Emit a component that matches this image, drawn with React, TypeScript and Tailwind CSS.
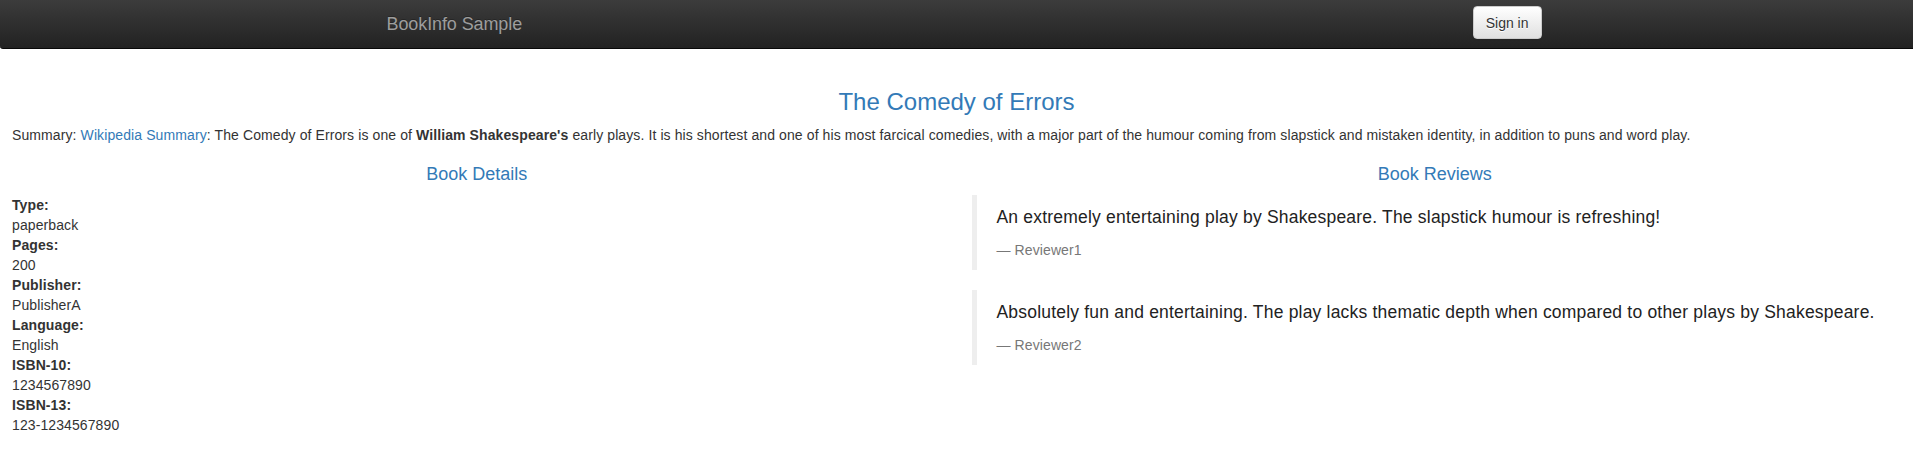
import React from "react";

const details: [string, string][] = [
  ["Type:", "paperback"],
  ["Pages:", "200"],
  ["Publisher:", "PublisherA"],
  ["Language:", "English"],
  ["ISBN-10:", "1234567890"],
  ["ISBN-13:", "123-1234567890"],
];

const reviews = [
  {
    text: "An extremely entertaining play by Shakespeare. The slapstick humour is refreshing!",
    who: "Reviewer1",
  },
  {
    text: "Absolutely fun and entertaining. The play lacks thematic depth when compared to other plays by Shakespeare.",
    who: "Reviewer2",
  },
];

export default function App() {
  return (
    <div
      className="min-h-[461px] bg-white text-[14px] leading-[20px] text-[#333] tracking-[0.1px]"
      style={{ fontFamily: '"Liberation Sans", Arial, Helvetica, sans-serif' }}
    >
      <nav className="h-[49px] border-b border-[#080808] bg-gradient-to-b from-[#3c3c3c] to-[#222] rounded-bl-[3px]">
        <div className="mx-auto flex h-[48px] w-[1170px] items-start justify-between pl-[15px]">
          <a
            href="#"
            className="mt-[14px] text-[18px] leading-[20px] tracking-[-0.1px] text-[#9d9d9d] [text-shadow:0_-1px_0_rgba(0,0,0,0.25)]"
          >
            BookInfo Sample
          </a>
          <button
            type="button"
            className="mt-[6px] h-[33px] rounded-[4px] border border-[#ccc] bg-gradient-to-b from-white to-[#e0e0e0] px-[12px] text-[14px] leading-[20px] tracking-normal text-[#333] shadow-[inset_0_1px_0_rgba(255,255,255,0.15),0_1px_1px_rgba(0,0,0,0.075)] [text-shadow:0_1px_0_#fff]"
          >
            Sign in
          </button>
        </div>
      </nav>

      <div className="px-[12px]">
        <h3 className="mt-[40px] mb-[10px] text-center text-[24px] leading-[26.4px] font-normal tracking-normal text-[#337ab7]">
          The Comedy of Errors
        </h3>
        <p className="mb-[10px]">
          Summary:{" "}
          <a href="#" className="text-[#337ab7]">
            Wikipedia Summary
          </a>
          : The Comedy of Errors is one of <b>William Shakespeare's</b> early
          plays. It is his shortest and one of his most farcical comedies, with a
          major part of the humour coming from slapstick and mistaken identity, in
          addition to puns and word play.
        </p>
      </div>

      <div className="grid grid-cols-2">
        <div className="pl-[12px] pr-[15px]">
          <h4 className="mt-[10px] mb-[10px] text-center text-[18px] leading-[19.8px] font-normal tracking-normal text-[#337ab7]">
            Book Details
          </h4>
          <dl className="mb-[20px]">
            {details.map(([k, v]) => (
              <React.Fragment key={k}>
                <dt className="font-bold">{k}</dt>
                <dd>{v}</dd>
              </React.Fragment>
            ))}
          </dl>
        </div>
        <div className="px-[15px]">
          <h4 className="mt-[10px] mb-[10px] text-center text-[18px] leading-[19.8px] font-normal tracking-normal text-[#337ab7]">
            Book Reviews
          </h4>
          {reviews.map((r) => (
            <blockquote
              key={r.who}
              className="mb-[20px] border-l-[5px] border-[#eee] px-[20px] py-[10px] text-[17.5px] leading-[25px]"
            >
              <p className="mb-[10px] tracking-[0.2px] text-[#222]">{r.text}</p>
              <small className="block text-[14px] leading-[20px] text-[#777]">
                {"\u2014\u00a0"}
                {r.who}
              </small>
            </blockquote>
          ))}
        </div>
      </div>
    </div>
  );
}
